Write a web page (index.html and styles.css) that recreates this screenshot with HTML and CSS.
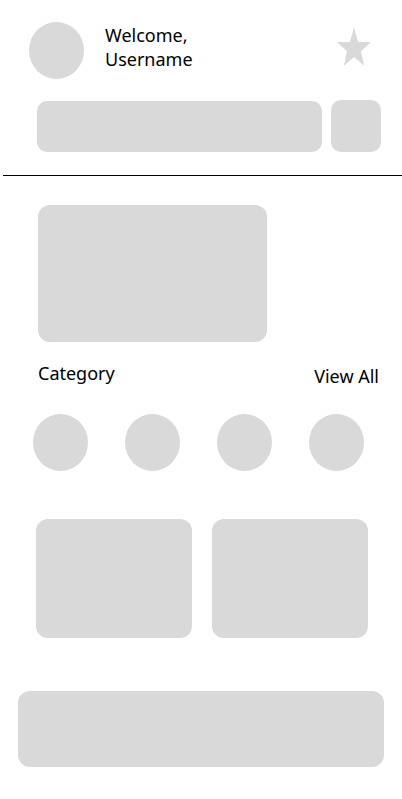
FILE: index.html
```html
<!DOCTYPE html>
<html lang="en">
<head>
<meta charset="utf-8">
<meta name="viewport" content="width=device-width, initial-scale=1">
<title>Home</title>
<link rel="stylesheet" href="styles.css">
</head>
<body>
<header class="header">
  <div class="profile">
    <div class="avatar"></div>
    <p class="greeting">Welcome,<br>Username</p>
    <button class="favorite" type="button" aria-label="Favorites">
      <svg class="star" viewBox="0 0 34 38" aria-hidden="true">
        <path d="M17 -0.800L21 14H34L24 23.200L27.200 37.700L17 29L6.800 37.700L10 23.200L0 14H13Z"/>
      </svg>
    </button>
  </div>
  <form class="search">
    <input class="search-input" type="search" aria-label="Search">
    <button class="search-button" type="button" aria-label="Filter"></button>
  </form>
</header>
<main>
  <section class="banner" aria-label="Featured"></section>
  <section>
    <div class="section-head">
      <h2 class="section-title">Category</h2>
      <a class="view-all" href="#">View All</a>
    </div>
    <div class="categories">
      <a class="category" href="#" aria-label="Category 1"></a>
      <a class="category" href="#" aria-label="Category 2"></a>
      <a class="category" href="#" aria-label="Category 3"></a>
      <a class="category" href="#" aria-label="Category 4"></a>
    </div>
  </section>
  <section class="cards" aria-label="Items">
    <article class="card"></article>
    <article class="card"></article>
  </section>
</main>
<nav class="bottom-bar" aria-label="Main"></nav>
</body>
</html>
```
FILE: styles.css
```css
:root {
  --fill: #d9d9d9;
  --radius: 12px;
}

* {
  box-sizing: border-box;
}

body {
  margin: 0;
  background: #fff;
  color: #000;
  font-family: "Noto Sans", sans-serif;
  font-size: 18px;
  line-height: 24px;
}

button,
input {
  margin: 0;
  padding: 0;
  border: 0;
  font: inherit;
}

.header {
  margin-left: 3px;
  padding: 22px 21px 23px 26px;
  border-bottom: 1px solid #000;
}

.profile {
  display: flex;
  align-items: flex-start;
  padding-right: 10px;
}

.avatar {
  width: 55px;
  height: 57px;
  border-radius: 50%;
  background: var(--fill);
}

.greeting {
  flex: 1;
  margin: 0 0 0 21px;
  padding-top: 1px;
}

.favorite {
  padding-top: 6px;
  background: none;
}

.star {
  display: block;
  width: 34px;
  height: 38px;
  overflow: visible;
  fill: var(--fill);
}

.search {
  display: flex;
  align-items: flex-end;
  gap: 9px;
  margin-top: 21px;
  padding-left: 8px;
}

.search-input {
  flex: 1;
  min-width: 0;
  height: 51px;
  padding: 0 16px;
  appearance: none;
  border-radius: 10px;
  background: var(--fill);
}

.search-button {
  width: 50px;
  height: 52px;
  border-radius: 10px;
  background: var(--fill);
}

.banner {
  width: 57%;
  height: 137px;
  margin: 29px 0 0 38px;
  border-radius: var(--radius);
  background: var(--fill);
}

.section-head {
  display: flex;
  align-items: flex-start;
  justify-content: space-between;
  margin: 19px 23px 0 38px;
}

.section-title {
  margin: 0;
  font-size: inherit;
  font-weight: 400;
}

.view-all {
  padding: 3px 0;
  color: inherit;
  text-decoration: none;
}

.categories {
  display: flex;
  justify-content: space-between;
  margin: 23px 38px 0 33px;
}

.category {
  width: 55px;
  height: 57px;
  border-radius: 50%;
  background: var(--fill);
}

.cards {
  display: grid;
  grid-template-columns: 1fr 1fr;
  gap: 20px;
  margin: 48px 34px 0 36px;
}

.card {
  height: 119px;
  border-radius: var(--radius);
  background: var(--fill);
}

.bottom-bar {
  height: 76px;
  margin: 53px 18px 32px;
  border-radius: var(--radius);
  background: var(--fill);
}
```
